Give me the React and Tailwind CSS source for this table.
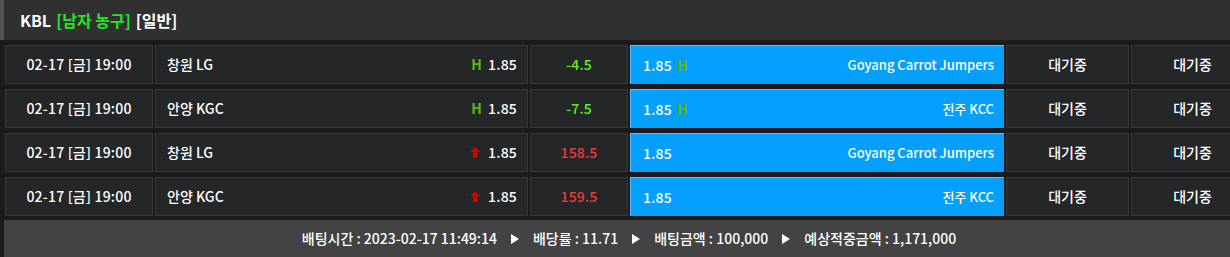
import React from 'react'

const rows = [
  { time: '02-17 [금] 19:00', home: '창원 LG', mark: 'H', line: '-4.5', lineColor: 'text-[#5ef01e]', away: 'Goyang Carrot Jumpers', awayMark: true },
  { time: '02-17 [금] 19:00', home: '안양 KGC', mark: 'H', line: '-7.5', lineColor: 'text-[#5ef01e]', away: '전주 KCC', awayMark: true },
  { time: '02-17 [금] 19:00', home: '창원 LG', mark: 'up', line: '158.5', lineColor: 'text-[#f03a3a]', away: 'Goyang Carrot Jumpers', awayMark: false },
  { time: '02-17 [금] 19:00', home: '안양 KGC', mark: 'up', line: '159.5', lineColor: 'text-[#f03a3a]', away: '전주 KCC', awayMark: false },
]

const cell = 'h-full bg-[#252628] border border-[#363738] flex items-center'

const UpArrow = () => (
  <svg width="10" height="11" viewBox="0 0 10 11" className="mr-[8px]">
    <path d="M5 0 L10 5 L7 5 L7 11 L3 11 L3 5 L0 5 Z" fill="#d40000" />
  </svg>
)

const Arrow = () => (
  <svg width="8" height="10" viewBox="0 0 8 10">
    <path d="M0 0 L8 5 L0 10 Z" fill="#ffffff" />
  </svg>
)

const Row = ({ r }) => (
  <div className="flex gap-[2px] h-[39px]">
    <div className={`${cell} w-[148px] shrink-0 justify-center tracking-[0.2px]`}>{r.time}</div>
    <div className={`${cell} w-[373px] shrink-0 justify-between pl-[11px] pr-[10px]`}>
      <span>{r.home}</span>
      <span className="flex items-center tracking-[0.2px]">
        {r.mark === 'H' ? (
          <span className="text-[#5cb814] font-bold mr-[6px]">H</span>
        ) : (
          <UpArrow />
        )}
        1.85
      </span>
    </div>
    <div className={`${cell} w-[98px] shrink-0 justify-center tracking-[0.2px] ${r.lineColor}`}>{r.line}</div>
    <div className="h-full w-[374px] shrink-0 bg-[#05a0fe] border-t border-l border-[#5cc0ff] flex items-center justify-between pl-[12px] pr-[10px]">
      <span className="flex items-center tracking-[0.2px]">
        1.85
        {r.awayMark && <span className="text-[#5cb814] font-bold ml-[5px]">H</span>}
      </span>
      <span className="text-[13px]">{r.away}</span>
    </div>
    <div className={`${cell} w-[123px] shrink-0 justify-center`}>대기중</div>
    <div className={`${cell} w-[123px] shrink-0 justify-center`}>대기중</div>
  </div>
)

const App = () => {
  return (
    <div className="w-[1230px] h-[257px] bg-[#1b1b1b] overflow-hidden text-white text-[14px] font-medium font-['Noto_Sans_CJK_KR',sans-serif]">
      <div className="h-[40px] bg-[#303030] border-l-[4px] border-[#555555] flex items-center pl-[16px] pb-[1px] text-[16px] font-bold">
        <span>KBL</span>
        <span className="text-[#22e622] ml-[5px]">[남자 농구]</span>
        <span className="ml-[5px]">[일반]</span>
      </div>
      <div className="w-[1260px] pl-[5px] pt-[5px] flex flex-col gap-[5px]">
        {rows.map((r, i) => (
          <Row key={i} r={r} />
        ))}
      </div>
      <div className="w-[1250px] ml-[4px] mt-[4px] h-[40px] bg-[#434343] flex items-center justify-center gap-[14px] pb-[3px]">
        <span>배팅시간 : 2023-02-17 11:49:14</span>
        <Arrow />
        <span>배당률 : 11.71</span>
        <Arrow />
        <span>배팅금액 : 100,000</span>
        <Arrow />
        <span>예상적중금액 : 1,171,000</span>
      </div>
    </div>
  )
}

export default App
